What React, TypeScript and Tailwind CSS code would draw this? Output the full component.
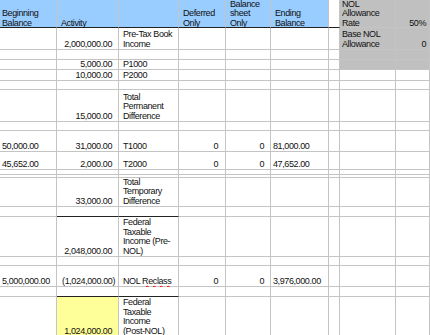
import React from 'react';

type Kind = 'A' | 'B' | 'Bn' | 'C' | 'D' | 'E' | 'F' | 'H' | 'I' | 'hd';

interface CellSpec {
  lines: React.ReactNode[];
  kind: Kind;
}

interface Row {
  cells: Record<number, CellSpec>;
  darkBottom?: number[];
}

const padFor: Record<Kind, string> = {
  A: 'justify-start pl-[2px]',
  B: 'justify-end text-right pr-[6px]',
  Bn: 'justify-end text-right pr-[3px]',
  C: 'justify-start pl-[4px]',
  D: 'justify-end text-right pr-[7px]',
  E: 'justify-end text-right pr-[6px]',
  F: 'justify-start pl-[2px]',
  H: 'justify-start pl-[2px]',
  I: 'justify-end text-right pr-[3px]',
  hd: 'justify-start pl-[4px]',
};

const c = (kind: Kind, ...lines: React.ReactNode[]): CellSpec => ({ kind, lines });

const rows: Row[] = [
  {
    cells: {
      0: c('A', 'Beginning', 'Balance'),
      1: c('hd', 'Activity'),
      3: c('hd', 'Deferred', 'Only'),
      4: c('hd', 'Balance', 'sheet', 'Only'),
      5: c('hd', 'Ending', 'Balance'),
      7: c('H', 'NOL', 'Allowance', 'Rate'),
      8: c('I', '50%'),
    },
    darkBottom: [0, 1, 2, 3, 4, 5, 6],
  },
  {
    cells: {
      1: c('B', '2,000,000.00'),
      2: c('C', 'Pre-Tax Book', 'Income'),
      7: c('H', 'Base NOL', 'Allowance'),
      8: c('I', '0'),
    },
  },
  { cells: {} },
  { cells: { 1: c('B', '5,000.00'), 2: c('C', 'P1000') } },
  { cells: { 1: c('B', '10,000.00'), 2: c('C', 'P2000') } },
  { cells: {} },
  { cells: { 1: c('B', '15,000.00'), 2: c('C', 'Total', 'Permanent', 'Difference') } },
  { cells: {} },
  {
    cells: {
      0: c('A', '50,000.00'),
      1: c('B', '31,000.00'),
      2: c('C', 'T1000'),
      3: c('D', '0'),
      4: c('E', '0'),
      5: c('F', '81,000.00'),
    },
  },
  {
    cells: {
      0: c('A', '45,652.00'),
      1: c('B', '2,000.00'),
      2: c('C', 'T2000'),
      3: c('D', '0'),
      4: c('E', '0'),
      5: c('F', '47,652.00'),
    },
  },
  { cells: {} },
  { cells: {} },
  { cells: { 1: c('B', '33,000.00'), 2: c('C', 'Total', 'Temporary', 'Difference') } },
  { cells: {}, darkBottom: [1, 2] },
  {
    cells: {
      1: c('B', '2,048,000.00'),
      2: c('C', 'Federal', 'Taxable', 'Income (Pre-', 'NOL)'),
    },
  },
  { cells: {} },
  {
    cells: {
      0: c('A', '5,000,000.00'),
      1: c('Bn', '(1,024,000.00)'),
      2: c(
        'C',
        <>
          NOL{' '}
          <span className="underline decoration-wavy decoration-[#ff0000] decoration-1 underline-offset-[1px]">
            Reclass
          </span>
        </>
      ),
      3: c('D', '0'),
      4: c('E', '0'),
      5: c('F', '3,976,000.00'),
    },
  },
  { cells: {}, darkBottom: [1, 2] },
  {
    cells: {
      1: c('B', '1,024,000.00'),
      2: c('C', 'Federal', 'Taxable', 'Income', '(Post-NOL)'),
    },
  },
];

const bgFor = (r: number, col: number) => {
  if (r === 0 && col <= 5) return 'bg-[#99ccff]';
  if (r <= 3 && col >= 7) return 'bg-[#c0c0c0]';
  if (r === 18 && col === 1) return 'bg-[#ffff99]';
  return 'bg-white';
};

export default function App() {
  return (
    <div className="w-[430px] h-[335px] overflow-hidden bg-white font-['Liberation_Sans',Arial,sans-serif] text-[9px] leading-[9.5px] tracking-[-0.4px] text-[#111]">
      <div className="grid grid-cols-[57px_62px_60px_47px_45px_58px_11px_56px_34px] grid-rows-[28px_22px_10px_10px_11px_9px_32px_9px_21px_18px_5px_3px_29px_10px_40px_9px_21px_10px_40px]">
        {rows.map((row, r) =>
          Array.from({ length: 9 }).map((_, col) => {
            const spec = row.cells[col];
            const dark = row.darkBottom?.includes(col);
            return (
              <div
                key={`${r}-${col}`}
                className={`flex items-end border-r border-b border-[#c4c4c4] ${
                  dark ? 'border-b-[#222]' : ''
                } ${bgFor(r, col)} ${spec ? padFor[spec.kind] : ''}`}
              >
                {spec && (
                  <div className={`whitespace-nowrap ${r === 0 ? '-mb-[1px]' : ''}`}>
                    {spec.lines.map((l, i) => (
                      <div key={i}>{l}</div>
                    ))}
                  </div>
                )}
              </div>
            );
          })
        )}
      </div>
    </div>
  );
}
